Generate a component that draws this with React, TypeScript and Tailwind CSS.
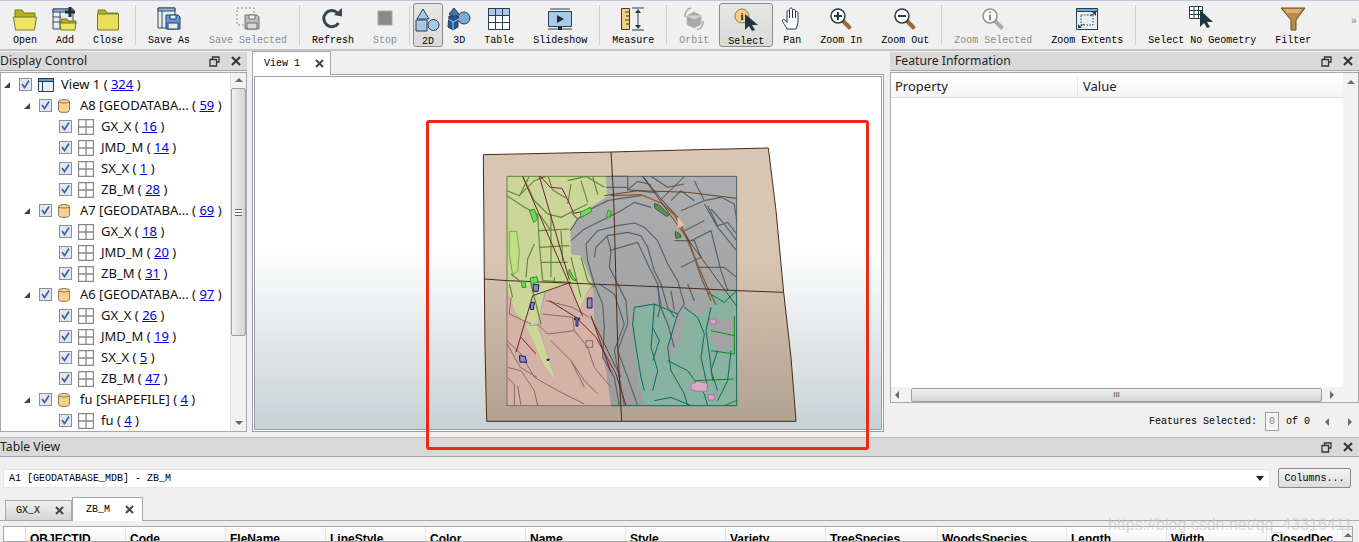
import type { ReactNode } from 'react';

const mono = 'font-["Liberation_Mono",monospace]';
const ink = '#2b3f48';

function Folder({ open = false }: { open?: boolean }) {
  return (
    <svg width="24" height="24" viewBox="0 0 24 24">
      <path d="M2 3h7l2 3h11v7H2z" fill="#b8b020" stroke="#7a7818" />
      {open ? (
        <path d="M0.500 10h23l-2 13H2.500z" fill="#ece564" stroke="#77752a" />
      ) : (
        <path d="M1.500 7h21v16h-21z" fill="#e8e05c" stroke="#77752a" />
      )}
    </svg>
  );
}

function IconAdd() {
  return (
    <svg width="26" height="24" viewBox="0 0 26 24">
      <path d="M1 2h20v20H1z" fill="#e4eef4" stroke="#3a4a50" />
      <path d="M1 2h20v3H1z" fill="#8fb4dc" stroke="#3a4a50" />
      <path d="M8 5v17M1 10h8M1 15h8" stroke="#3a4a50" fill="none" />
      <path d="M9 12h6l1 2h8v3H9z" fill="#b8b020" stroke="#77752a" />
      <path d="M8 16h16l-1 7H9z" fill="#ece564" stroke="#77752a" />
      <path d="M18 0v10M13 5h10" stroke="#1f2f36" strokeWidth="3" />
    </svg>
  );
}

function IconSave({ muted = false }: { muted?: boolean }) {
  const c = muted ? '#707070' : '#1f3f6c';
  const f = muted ? '#bcbcbc' : '#5f9ad8';
  return (
    <svg width="24" height="24" viewBox="0 0 24 24">
      {muted ? (
        <path d="M1 1h17v17H1z" fill="none" stroke="#8a8a8a" strokeDasharray="2 2" />
      ) : (
        <>
          <path d="M1 1h17v20H1z" fill="#e4eef4" stroke="#3a4a50" />
          <path d="M1 1h17v3H1z" fill="#8fb4dc" stroke="#3a4a50" />
          <path d="M5 4v17" stroke="#3a4a50" />
        </>
      )}
      <path d="M9 8h12l2 2v12H9z" fill={f} stroke={c} />
      <path d="M13 8h6v4h-6z" fill="#eef2f6" stroke={c} />
      <path d="M11 16h10v6H11z" fill={muted ? '#d8d8d8' : '#e6eef8'} stroke={c} />
    </svg>
  );
}

function IconRefresh() {
  return (
    <svg width="24" height="24" viewBox="0 0 24 24">
      <path d="M17.500 16a8 8 0 1 1-1-10" fill="none" stroke="#36474f" strokeWidth="3" />
      <path d="M13 8l8 1.500V1z" fill="#36474f" />
    </svg>
  );
}

function IconStop() {
  return (
    <svg width="24" height="24" viewBox="0 0 24 24">
      <path d="M5 4h14v14H5z" fill="#8a8a8a" stroke="#a8a8a8" />
    </svg>
  );
}

function Icon2D() {
  return (
    <svg width="26" height="24" viewBox="0 0 26 24">
      <path d="M8 1l6 10H2z" fill="#a8c9ea" stroke={ink} />
      <path d="M1 12h11v11H1z" fill="#a8c9ea" stroke={ink} />
      <circle cx="18.500" cy="17" r="5.500" fill="#a8c9ea" stroke={ink} />
    </svg>
  );
}

function Icon3D() {
  return (
    <svg width="26" height="24" viewBox="0 0 26 24">
      <circle cx="18" cy="11" r="6" fill="#7fa8d0" stroke={ink} />
      <path d="M8 1l5 6-5 3-5-3z" fill="#3f78b0" stroke={ink} />
      <path d="M3 9l9 0 0 11-5 3-5-3z" fill="#1f5a94" stroke={ink} />
      <path d="M2 12l5 3 6-3M7 15v8" fill="none" stroke="#a8c9ea" />
    </svg>
  );
}

function IconTable() {
  return (
    <svg width="24" height="24" viewBox="0 0 24 24">
      <path d="M1.500 1.500h21v21h-21z" fill="#fff" stroke={ink} />
      <path d="M1.500 1.500h21v7h-21z" fill="#a8c9ea" />
      <path d="M1.500 1.500h21v21h-21zM8.500 1.500v21M15.500 1.500v21M1.500 8.500h21M1.500 15.500h21" fill="none" stroke={ink} />
    </svg>
  );
}

function IconSlideshow() {
  return (
    <svg width="26" height="24" viewBox="0 0 26 24">
      <path d="M3 2h20" stroke={ink} />
      <path d="M1.500 4.500h23v15h-23z" fill="#a8c9ea" stroke={ink} />
      <path d="M10 8l7 4-7 4z" fill="#1f2f36" />
      <path d="M1 22h24" stroke={ink} />
      <path d="M11 20h4v3h-4z" fill="#1f2f36" />
    </svg>
  );
}

function IconMeasure() {
  return (
    <svg width="26" height="24" viewBox="0 0 26 24">
      <path d="M1.500 1.500h8v21h-8z" fill="#f8cf80" stroke={ink} />
      <path d="M5 5h4M6 9h3M5 13h4M6 17h3" stroke={ink} />
      <path d="M12 1h12M12 23h12M18 3v18" stroke={ink} fill="none" />
      <path d="M15 6l3-4 3 4zM15 18l3 4 3-4z" fill={ink} />
    </svg>
  );
}

function IconOrbit() {
  return (
    <svg width="24" height="24" viewBox="0 0 24 24">
      <path d="M12 5l7 3.500v9L12 21l-7-3.500v-9z" fill="#a8a8a8" stroke="#bcbcbc" />
      <path d="M5 8.500l7 3.500 7-3.500" fill="#d0d0d0" stroke="#d8d8d8" />
      <path d="M3 10A8 8 0 0 1 9 1M21 14a8 8 0 0 1-6 9" fill="none" stroke="#a8a8a8" strokeWidth="1.500" />
    </svg>
  );
}

function IconSelect() {
  return (
    <svg width="26" height="24" viewBox="0 0 26 24">
      <circle cx="9" cy="8" r="7" fill="#f8cf80" stroke="#8a7a50" />
      <text x="9" y="12" textAnchor="middle" fontSize="11" fontWeight="700" fontFamily="Liberation Serif" fill="#222">i</text>
      <path d="M12 6v16l4-4 3 5 3-1-3-5h6z" fill="#1f3540" />
    </svg>
  );
}

function IconPan() {
  return (
    <svg width="20" height="24" viewBox="0 0 20 24">
      <path
        d="M5 22c-1-3-4-6-4.500-8-.3-1.500 1.500-2 2.500-1l2 2.500V5c0-2 2.500-2 2.500 0v-2.500c0-2 3-2 3 0V4c0-2 3-2 3 0v2c0-2 2.500-2 2.500 0v8c0 3-1 5-2 8z"
        fill="#fff"
        stroke="#2a3a40"
      />
      <path d="M7.500 5v6M10.500 3v8M13.500 4v7" stroke="#2a3a40" fill="none" />
    </svg>
  );
}

function IconZoom({ sign, muted = false }: { sign: 'plus' | 'minus' | 'i'; muted?: boolean }) {
  const c = muted ? '#8f8f8f' : '#2a3a40';
  const h = muted ? '#aaaaaa' : '#9a6a30';
  return (
    <svg width="24" height="24" viewBox="0 0 24 24">
      <path d="M14 14l7.500 7.500" stroke={h} strokeWidth="4" />
      <circle cx="9" cy="9" r="7" fill="#fff" stroke={c} strokeWidth="1.500" />
      {sign === 'i' ? (
        <path d="M9 4.500v1.500M9 7.500v6" stroke={c} strokeWidth="2" />
      ) : (
        <path d={sign === 'plus' ? 'M5 9h8M9 5v8' : 'M5 9h8'} stroke={c} strokeWidth="2" />
      )}
    </svg>
  );
}

function IconExtents() {
  return (
    <svg width="24" height="24" viewBox="0 0 24 24">
      <path d="M1.500 1.500h21v21h-21z" fill="#e8f0f4" stroke={ink} />
      <path d="M1.500 1.500h21v3h-21z" fill="#6fa4dc" stroke={ink} />
      <path d="M6 8h12v10H6z" fill="none" stroke={ink} strokeDasharray="1.500 1.500" />
      <path d="M15 9l5-3M9 17l-5 3" stroke={ink} />
      <path d="M17 5h4v4zM7 21H3v-4z" fill={ink} />
    </svg>
  );
}

function IconNoGeometry() {
  return (
    <svg width="26" height="26" viewBox="0 0 26 26">
      <path d="M0.500 0.500h13v12h-13zM0.500 4.500h13M0.500 8.500h13M5 0.500v12M9.500 0.500v12" fill="#fff" stroke={ink} />
      <path d="M11 4v17l4-4 3 5 3-1-3-5h6z" fill="#1f3540" />
    </svg>
  );
}

function IconFilter() {
  return (
    <svg width="26" height="24" viewBox="0 0 26 24">
      <path d="M1 1h24l-9 12v10h-5V13z" fill="#b98a4c" stroke="#6a4a20" />
      <path d="M4 2h18l-3 4H7z" fill="#d8b078" />
    </svg>
  );
}

function ToolButton({ label, icon, muted = false, pressed = false }: { label: string; icon: ReactNode; muted?: boolean; pressed?: boolean }) {
  return (
    <div
      className={`flex flex-col items-center h-[44px] rounded-[3px] ${
        pressed ? 'px-[8px] border border-[#8a8a8a] bg-gradient-to-b from-[#e6e6e6] to-[#dadada]' : 'px-[9px]'
      }`}
    >
      {/* zero width wrapper so a wide icon never pushes the button wider than its label */}
      <div className="h-[24px] w-0 mt-[4px] flex items-center justify-center [&>svg]:shrink-0">{icon}</div>
      <span className={`mt-[4px] text-[10px] leading-[12px] whitespace-nowrap ${muted ? 'text-[#8c8c8c]' : 'text-black'}`}>{label}</span>
    </div>
  );
}

function Sep() {
  return <div className="w-px h-[40px] mx-[2px] bg-[#d0d0d0]" />;
}

function Toolbar() {
  return (
    <div className={`h-[51px] shrink-0 flex items-center gap-px pl-[4px] border-t border-t-[#c6c6da] border-b-2 border-b-[#c4c4c4] ${mono}`}>
      <ToolButton label="Open" icon={<Folder open />} />
      <ToolButton label="Add" icon={<IconAdd />} />
      <ToolButton label="Close" icon={<Folder />} />
      <Sep />
      <ToolButton label="Save As" icon={<IconSave />} />
      <ToolButton label="Save Selected" icon={<IconSave muted />} muted />
      <Sep />
      <ToolButton label="Refresh" icon={<IconRefresh />} />
      <ToolButton label="Stop" icon={<IconStop />} muted />
      <Sep />
      <ToolButton label="2D" icon={<Icon2D />} pressed />
      <ToolButton label="3D" icon={<Icon3D />} />
      <ToolButton label="Table" icon={<IconTable />} />
      <ToolButton label="Slideshow" icon={<IconSlideshow />} />
      <Sep />
      <ToolButton label="Measure" icon={<IconMeasure />} />
      <Sep />
      <ToolButton label="Orbit" icon={<IconOrbit />} muted />
      <ToolButton label="Select" icon={<IconSelect />} pressed />
      <ToolButton label="Pan" icon={<IconPan />} />
      <ToolButton label="Zoom In" icon={<IconZoom sign="plus" />} />
      <ToolButton label="Zoom Out" icon={<IconZoom sign="minus" />} />
      <Sep />
      <ToolButton label="Zoom Selected" icon={<IconZoom sign="i" muted />} muted />
      <ToolButton label="Zoom Extents" icon={<IconExtents />} />
      <Sep />
      <ToolButton label="Select No Geometry" icon={<IconNoGeometry />} />
      <ToolButton label="Filter" icon={<IconFilter />} />
      <span className="ml-auto mr-[2px] mb-[8px] text-[10px] text-[#888]">»</span>
    </div>
  );
}

function TitleBar({ title, className = '' }: { title: string; className?: string }) {
  return (
    <div className={`h-[19px] shrink-0 flex items-center bg-[#d9d9d9] border-b border-b-[#a8a8a8] text-[12.2px] text-[#222] ${className}`}>
      <span className="flex-1 pt-px whitespace-nowrap">{title}</span>
      <svg width="11" height="11" viewBox="0 0 11 11" className="mr-[11px]">
        <path d="M3.500 3V1h6.500v5H8M1 3.500h6.500v6.500H1z" fill="none" stroke="#333" strokeWidth="1.300" />
      </svg>
      <svg width="10" height="10" viewBox="0 0 10 10" className="mr-[6px]">
        <path d="M1 1l8 8M9 1l-8 8" stroke="#333" strokeWidth="2" />
      </svg>
    </div>
  );
}

function CloseX({ className = '' }: { className?: string }) {
  return (
    <svg width="9" height="9" viewBox="0 0 9 9" className={className}>
      <path d="M1 1l7 7M8 1l-7 7" stroke="#3a4a50" strokeWidth="2" />
    </svg>
  );
}

const treeRows: { level: 0 | 1 | 2; name: string; count: number; icon: 'view' | 'db' | 'grid' }[] = [
  { level: 0, name: 'View 1', count: 324, icon: 'view' },
  { level: 1, name: 'A8 [GEODATABA...', count: 59, icon: 'db' },
  { level: 2, name: 'GX_X', count: 16, icon: 'grid' },
  { level: 2, name: 'JMD_M', count: 14, icon: 'grid' },
  { level: 2, name: 'SX_X', count: 1, icon: 'grid' },
  { level: 2, name: 'ZB_M', count: 28, icon: 'grid' },
  { level: 1, name: 'A7 [GEODATABA...', count: 69, icon: 'db' },
  { level: 2, name: 'GX_X', count: 18, icon: 'grid' },
  { level: 2, name: 'JMD_M', count: 20, icon: 'grid' },
  { level: 2, name: 'ZB_M', count: 31, icon: 'grid' },
  { level: 1, name: 'A6 [GEODATABA...', count: 97, icon: 'db' },
  { level: 2, name: 'GX_X', count: 26, icon: 'grid' },
  { level: 2, name: 'JMD_M', count: 19, icon: 'grid' },
  { level: 2, name: 'SX_X', count: 5, icon: 'grid' },
  { level: 2, name: 'ZB_M', count: 47, icon: 'grid' },
  { level: 1, name: 'fu [SHAPEFILE]', count: 4, icon: 'db' },
  { level: 2, name: 'fu', count: 4, icon: 'grid' },
];

function TreeIcon({ kind }: { kind: 'view' | 'db' | 'grid' }) {
  if (kind === 'view') {
    return (
      <svg width="16" height="14" viewBox="0 0 16 14" className="mr-[7px]">
        <path d="M0.500 0.500h15v13H0.500z" fill="#e8f0f4" stroke="#2b3f48" />
        <path d="M0.500 0.500h15v3H0.500z" fill="#5f9ad8" stroke="#2b3f48" />
        <path d="M4.500 3.500v10" stroke="#2b3f48" />
      </svg>
    );
  }
  if (kind === 'db') {
    return (
      <svg width="12" height="14" viewBox="0 0 12 14" className="mr-[10px]">
        <path d="M0.500 2.500c0-2.600 11-2.600 11 0v9c0 2.600-11 2.600-11 0z" fill="#fbd08c" stroke="#8a7a60" />
        <path d="M0.500 2.500c0 2 11 2 11 0" fill="none" stroke="#8a7a60" />
      </svg>
    );
  }
  return (
    <svg width="16" height="16" viewBox="0 0 16 16" className="mr-[7px]">
      <path d="M0.500 0.500h15v15H0.500zM8 0.500v15M0.500 8h15" fill="#fff" stroke="#888" strokeWidth="1.300" />
    </svg>
  );
}

function TreeRow({ row }: { row: (typeof treeRows)[number] }) {
  const pad = row.level === 0 ? 'pl-[3px]' : row.level === 1 ? 'pl-[23px]' : 'pl-[58px]';
  return (
    <div className={`h-[21px] flex items-center whitespace-nowrap text-[13px] text-[#111] ${pad}`}>
      {row.level < 2 && (
        <svg width="6" height="6" viewBox="0 0 6 6" className="mr-[9px]">
          <path d="M6 0v6H0z" fill="#444" />
        </svg>
      )}
      <div className="w-[13px] h-[13px] mr-[6px] flex items-center justify-center border border-[#8e8f8f] bg-[#e2e8f2]">
        <svg width="9" height="9" viewBox="0 0 9 9">
          <path d="M1 4l2.500 3.500L8 0.500" fill="none" stroke="#3c5ea0" strokeWidth="1.600" />
        </svg>
      </div>
      <TreeIcon kind={row.icon} />
      <span>{row.name} (&nbsp;</span>
      <span className="text-[#0000e0] underline">{row.count}</span>
      <span>&nbsp;)</span>
    </div>
  );
}

function Arrow({ dir, className = '' }: { dir: 'up' | 'down' | 'left' | 'right'; className?: string }) {
  const d = { up: 'M0 5l4-4 4 4z', down: 'M0 2l4 4 4-4z', left: 'M5 0v8L1 4z', right: 'M2 0v8l4-4z' }[dir];
  return (
    <svg width="8" height="8" viewBox="0 0 8 8" className={className}>
      <path d={d} fill="#6a6a6a" />
    </svg>
  );
}

function DisplayControl() {
  return (
    <div className="w-[247px] shrink-0 flex flex-col pt-px pb-[5px]">
      <TitleBar title="Display Control" />
      <div className="mt-px flex-1 min-h-0 flex border border-[#a8a8a8] bg-white">
        <div className="flex-1 min-w-0 overflow-hidden pt-px">
          {treeRows.map((row, i) => (
            <TreeRow key={i} row={row} />
          ))}
        </div>
        <div className="w-[16px] flex flex-col items-center bg-[#f2f2f2] border-l border-l-[#e4e4e4]">
          <Arrow dir="up" className="mt-[4px] mb-[3px]" />
          <div className="w-[15px] h-[248px] flex items-center justify-center rounded-[2px] border border-[#a0a0a0] bg-gradient-to-r from-[#f0f0f0] to-[#d4d4d4]">
            <div className="w-[7px] h-[7px] border-y border-[#666] bg-[linear-gradient(#fff_33%,#666_33%,#666_66%,#fff_66%)]" />
          </div>
          <Arrow dir="down" className="mt-auto mb-[4px]" />
        </div>
      </div>
    </div>
  );
}

const greenLines = [
  'M108 140l37 15 45-45 35-13M108 155l52 35 40 20 5 90 10 110M155 97l35 73 40 40 40 10 30-15 50-25M205 260l90-5M205 310l90-5M210 355h80M240 210v190M270 260l5 90M300 120l-10 60M330 110l20 65M345 97l55 33M290 110l55-13M190 300l-20 45-5 55M145 410l-25-20M115 420l10 40M232 97l12 40 40 25M175 97l-30 60',
  'M180 420l30 120M300 340l30 120M330 340l20 70 20 20M215 410l85 5M250 400v15M365 97l15 55M300 205l20 20M205 210l35 50',
];
const grayLines = [
  'M298 260l22-35 40-30 50-25 60-10 40-5',
  'M300 290l40-35 55-27 55-28 40-25 50 15',
  'M345 300l35-40 60-15 50-8 30 13 40 40 30 70 30 50 20 70-20 30',
  'M370 340l5-30 35-35 60-10 40 10 20 35 20 70 20 40 20 70 20 30',
  'M408 275l12 45-5 50 25 50 25 50 5 70-30 80 30 80 30 85',
  'M415 320l85-25 30 65 30 60 5 60 25 60 20 70',
  'M345 300l5 50 20 70 25 60 5 70-5 90 35 60 15 85',
  'M385 420l45 30 30 90-30 80 30 165',
  'M515 97l55 68 50 55 30 70 20 50 20 60 30 70M540 97l50 33 50-10M670 110l30 60 50-10 40 20 7 50M700 180l40 70 57 70M720 195l40 45 37 50M630 200l70-30M660 290l60-30 30 120M700 230l-60 30M610 290h60l20 50-60 30M680 370h80l37 30M770 440l-20-60M420 97h50v40l30-25 40 10M405 130h65M470 137l90 10M560 430l10 50-10 40M600 440l10 60M650 420l20 50M710 185l30 60 30-10 27 35M600 170l30-30 40 30',
];
const pinkLines = [
  'M108 590l42 40 40 70 70 40 80 40M108 670l42 10 40 60 10 45M108 700l22 20v65M120 460l-5 50 65 30M225 470l80 20 50 30M215 510l90 10 5 40-80 10-30-30M310 560l40 50 20 60 50 60M240 590l60 60 40 60 40 40M345 590h20v20h-20zM108 600l40 70 50 30M300 650l40 80M150 785l-10-60',
];
const tealLines = [
  'M490 490l60-10 70 30M490 490l-5 50 10 70 15 90 10 40M550 480l-5 70-5 60 20 70-15 60M620 510l-30 100 10 70 40 70 10 35M545 550l20 40-20 60M680 520l20 50-10 70 20 90M720 490l-15 70 10 70 10 80M590 650l60 30 50 70 10 35M640 490l40 30M710 445l50 30 37-35M740 620l-20 60 20 60M780 620l-10 90-30 60M550 770l50-10 60 25',
];

function MapPreview() {
  return (
    <svg width="330" height="285" viewBox="0 0 990 855" className="ml-[216px] mt-[67px] block">
      <defs>
        <linearGradient id="sheet" x1="0" y1="0" x2="0" y2="1">
          <stop offset="0" stopColor="#d8c5b4" />
          <stop offset="0.4" stopColor="#d8c5b4" />
          <stop offset="1" stopColor="#b2a291" />
        </linearGradient>
        <linearGradient id="rock" x1="0" y1="0" x2="0" y2="1">
          <stop offset="0" stopColor="#adadaf" />
          <stop offset="1" stopColor="#9d9d9d" />
        </linearGradient>
      </defs>
      <path d="M37 32l383-8 260-7 212-5 23 188 23 245 22 195 15 192H47l-5-222-2-205z" fill="url(#sheet)" stroke="#4a2a14" strokeWidth="3" />
      <path d="M108 97h689v688H108z" fill="url(#rock)" />
      <path d="M108 97h295l6 60-50 32-40 36-21 35 2 70 30 5 35 85-20 30-20 50-25-80-80 25-20 95-35 5-35-45-22-60z" fill="#ccd69b" />
      <path d="M165 545h35l55 168-40-55z" fill="#ccd69b" />
      <path d="M108 440l12 20 10 40 35 45 50 113 40 55-55-173 25-95 75-25 25 80 20-50 20-20 5 100 30 120 20 135H108z" fill="#d4b2a6" />
      <path d="M115 262h22l8 60-5 60-15 10-10-60z" fill="#bfe082" stroke="#5f8a32" strokeWidth="2" />
      <path d="M490 490l60-10 70 30 20-20 40 30 40-30-10-45 87-5v345H522l-17-65-15-100-5-70z" fill="#87b3a0" />
      <path d="M725 530l65-10-5 90-45 15-20-45z" fill="#a3a3a5" />
      <path d="M620 510l-30 100 10 40 30-60 10-100z" fill="#a3a3a5" />
      <path d="M108 97h295" stroke="#5f8a32" strokeWidth="3" fill="none" />
      <path d="M403 97h394v345" stroke="#4f6068" strokeWidth="3" fill="none" />
      <path d="M797 442v343H420" stroke="#0b6a62" strokeWidth="3" fill="none" />
      <path d="M420 785H108V410" stroke="#8a6a68" strokeWidth="3" fill="none" />
      <path d="M108 410V97" stroke="#5f8a32" strokeWidth="3" fill="none" />
      {greenLines.map((d, i) => (
        <path key={i} d={d} fill="none" stroke="#5f8a32" strokeWidth="3.500" />
      ))}
      {grayLines.map((d, i) => (
        <path key={i} d={d} fill="none" stroke="#56626e" strokeWidth="3.500" />
      ))}
      {pinkLines.map((d, i) => (
        <path key={i} d={d} fill="none" stroke="#8a6a68" strokeWidth="3" />
      ))}
      {tealLines.map((d, i) => (
        <path key={i} d={d} fill="none" stroke="#0b6a62" strokeWidth="3" />
      ))}
      <path d="M720 560l70 15M790 515v115l-70-10M670 710l120-5M760 785l35-15" fill="none" stroke="#109010" strokeWidth="3" />
      <path d="M155 97l130 300 50 120M205 97l90 310M235 470l80 50 60 60 60 110 30 95M135 625l50-170 115-40M150 580l45 50M360 515l60 170" fill="none" stroke="#74202f" strokeWidth="3" />
      <path d="M208 97l30 33 35 3 20 40 15 35 25-5" fill="none" stroke="#8a1060" strokeWidth="3" />
      <path d="M420 155l90-3 60 25 40 35 40 70 30 80 30 70 25 50" fill="none" stroke="#a0561c" strokeWidth="4" />
      <path d="M400 155l100-15 150 5 147 18M515 97l140 195 142 195M640 97l-70 70M450 700l-90-180" fill="none" stroke="#5a3010" strokeWidth="2.500" />
      <path d="M420 24l8 136 7 260 5 180 12 232M40 405l70 5 300 12 190 8 200 10 138 5" fill="none" stroke="#4a2a14" strokeWidth="3" />
      <path d="M620 218l20 25-20 10z" fill="#e4c4a0" />
      <path d="M175 200l15-5 10 30-12 10zM150 410l12 5 3 15-12 0zM178 402l20-4 3 18-22 2zM295 375l12 25 10 10-12-2-12-20zM328 205l30-15 5 12-32 18zM412 198l10 5-8 18-8-3z" fill="#7fd060" stroke="#18a018" strokeWidth="3" />
      <path d="M550 178l15 5 30 30-8 5-35-25zM612 262l15 8 3 10-15 3z" fill="#5f8a55" stroke="#2f6f30" strokeWidth="3" />
      <path d="M186 422h18l-3 20h-14zM180 475l10 0-3 22-10-2zM349 462h14v30h-14zM310 522h16v4h-5v20h-6v-20h-5zM145 635l18 2 4 18-20-1zM227 647l8-2-4 6z" fill="#8f8fb8" stroke="#14146e" strokeWidth="3" />
      <path d="M715 525h20v15h-15zM660 720l20-8 30 6-3 24h-30l-17-5zM712 752h18v16h-18z" fill="#d8a8c4" stroke="#b070a8" strokeWidth="3" />
    </svg>
  );
}

function CenterView() {
  return (
    <div className="w-[632px] ml-[5px] shrink-0 flex flex-col pb-[5px]">
      <div className={`relative z-10 h-[24px] w-[79px] -mb-px flex items-center pl-[11px] bg-white border border-b-0 border-[#a8a8a8] text-[10px] ${mono}`}>
        <span className="text-black">View 1</span>
        <CloseX className="ml-[15px]" />
      </div>
      <div className="flex-1 min-h-0 border border-[#a0a0a8] bg-white p-px">
        <div className="h-full border border-[#a0a0a8] bg-gradient-to-b from-white from-[48%] to-[#c7d2d4] overflow-hidden">
          <MapPreview />
        </div>
      </div>
    </div>
  );
}

function FeatureInfo() {
  return (
    <div className="w-[469px] ml-[6px] shrink-0 flex flex-col pt-px">
      <TitleBar title="Feature Information" className="pl-[5px]" />
      <div className="mt-px h-[331px] flex border border-[#a8a8a8] bg-white">
        <div className="flex-1 min-w-0 flex flex-col">
          <div className="mt-[3px] h-[22px] flex items-center bg-gradient-to-b from-white to-[#f4f4f4] border-b border-b-[#dcdcdc] text-[13px] text-[#222]">
            <span className="w-[187px] pl-[4px] border-r border-r-[#e4e4e4]">Property</span>
            <span className="pl-[5px]">Value</span>
          </div>
          <div className="flex-1" />
          <div className="h-[15px] flex items-center bg-[#f2f2f2]">
            <Arrow dir="left" className="ml-[3px] mr-[9px]" />
            <div className="flex-1 h-[14px] flex items-center justify-center rounded-[2px] border border-[#a0a0a0] bg-gradient-to-b from-[#f0f0f0] to-[#d4d4d4]">
              <span className="text-[8px] leading-none text-[#444] font-['Liberation_Sans',sans-serif]">III</span>
            </div>
            <Arrow dir="right" className="ml-[6px] mr-[7px]" />
          </div>
        </div>
        <div className="w-[15px] flex flex-col items-center bg-[#f2f2f2]">
          <Arrow dir="up" className="mt-[6px]" />
        </div>
      </div>
      <div className={`flex-1 pt-[3px] flex items-center justify-end text-[10px] text-black ${mono}`}>
        <span>Features Selected:</span>
        <span className="ml-[8px] w-[14px] h-[19px] flex items-center justify-center border border-[#a0a0a0] text-[#888] bg-[#f4f4f4]">0</span>
        <span className="ml-[7px]">of 0</span>
        <Arrow dir="left" className="ml-[14px]" />
        <Arrow dir="right" className="ml-[14px] mr-[5px]" />
      </div>
    </div>
  );
}

const columns = [
  { name: 'OBJECTID', w: 'w-[100px]' },
  { name: 'Code', w: 'w-[100px]' },
  { name: 'FleName', w: 'w-[100px]' },
  { name: 'LineStyle', w: 'w-[100px]' },
  { name: 'Color', w: 'w-[100px]' },
  { name: 'Name', w: 'w-[100px]' },
  { name: 'Style', w: 'w-[100px]' },
  { name: 'Variety', w: 'w-[100px]' },
  { name: 'TreeSpecies', w: 'w-[112px]' },
  { name: 'WoodsSpecies', w: 'w-[129px]' },
  { name: 'Length', w: 'w-[100px]' },
  { name: 'Width', w: 'w-[100px]' },
  { name: 'ClosedDec', w: 'w-[76px]' },
];

function TableView() {
  return (
    <div className="flex-1 min-h-0 flex flex-col">
      <div className="border-t border-t-[#c0c0c0]">
        <TitleBar title="Table View" />
      </div>
      <div className={`mt-[11px] h-[20px] flex items-center ${mono} text-[10px] text-black`}>
        <div className="ml-[3px] w-[1267px] h-[19px] flex items-center pl-[5px] bg-white border border-[#e6e6e6]">
          <span className="flex-1">A1 [GEODATABASE_MDB] - ZB_M</span>
          <svg width="8" height="5" viewBox="0 0 8 5" className="mr-[5px]">
            <path d="M0 0h8L4 5z" fill="#222" />
          </svg>
        </div>
        <div className="ml-[8px] w-[73px] h-[20px] flex items-center justify-center rounded-[2px] border border-[#888] bg-gradient-to-b from-[#f4f4f4] to-[#dcdcdc]">
          Columns...
        </div>
      </div>
      <div className={`mt-[9px] h-[24px] flex items-end pl-[5px] border-b border-b-[#a8a8a8] ${mono} text-[10px] text-black`}>
        <div className="w-[67px] h-[21px] -mb-px flex items-center pl-[10px] border border-[#a8a8a8] bg-gradient-to-b from-[#f0f0f0] to-[#d4d4d4]">
          <span>GX_X</span>
          <CloseX className="ml-[15px]" />
        </div>
        <div className="w-[71px] h-[24px] -mb-px flex items-center pl-[13px] border border-b-0 border-[#a8a8a8] bg-white">
          <span>ZB_M</span>
          <CloseX className="ml-[15px]" />
        </div>
      </div>
      <div className="mt-[5px] ml-[3px] mr-[6px] flex-1 flex border border-[#a8a8a8] bg-white font-['Liberation_Sans',sans-serif] text-[12px] font-bold text-black overflow-hidden">
        <div className="w-[22px] shrink-0 border-r border-r-[#e0e0e0]" />
        {columns.map((c) => (
          <div key={c.name} className={`${c.w} shrink-0 pl-[4px] pt-[3px] border-r border-r-[#e4e4e4] whitespace-nowrap overflow-hidden bg-gradient-to-b from-white to-[#f4f4f4]`}>
            {c.name}
          </div>
        ))}
        <div className="flex-1 flex justify-center bg-[#f2f2f2]">
          <Arrow dir="up" className="mt-[5px]" />
        </div>
      </div>
    </div>
  );
}

export default function App() {
  return (
    <div className="relative w-[1359px] h-[542px] overflow-hidden flex flex-col bg-[#f0f0f0] font-['Noto_Sans',sans-serif]">
      <Toolbar />
      <div className="h-[386px] shrink-0 flex">
        <DisplayControl />
        <CenterView />
        <FeatureInfo />
      </div>
      <TableView />
      {/* red annotation box drawn over the screenshot */}
      <div className="absolute left-[426px] top-[120px] w-[443px] h-[330px] rounded-[3px] border-[3px] border-[#f02818] pointer-events-none" />
      <div className="absolute left-[1108px] top-[514px] text-[16px] leading-[22px] text-[#c8c8c8]/70 font-['Liberation_Sans',sans-serif] whitespace-nowrap pointer-events-none">
        https://blog.csdn.net/qq_43316411
      </div>
    </div>
  );
}
